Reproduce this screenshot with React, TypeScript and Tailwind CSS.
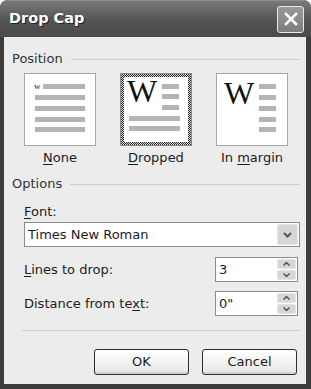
import React from "react";

function Bars({ rows }: { rows: [number, number, number][] }) {
  return (
    <>
      {rows.map(([x1, x2, y], i) => (
        <rect key={i} x={x1} y={y} width={x2 - x1} height={5} fill="#b4b4b4" />
      ))}
    </>
  );
}

function NoneIcon() {
  return (
    <svg width="70" height="71" viewBox="1 1 70 71" className="overflow-visible">
      <text x="10" y="16" fontSize="9" fontFamily="'Liberation Serif', serif" fill="#222">w</text>
      <Bars rows={[[19, 61, 11], [11, 61, 22], [11, 61, 33], [11, 61, 44], [11, 61, 54]]} />
    </svg>
  );
}

function DroppedIcon() {
  return (
    <svg width="64" height="65" viewBox="5 5 64 65" className="overflow-visible">
      <text x="8" y="30" fontSize="32" fontFamily="'Liberation Serif', serif" fill="#111">W</text>
      <Bars rows={[[43, 60, 12], [43, 60, 22], [43, 60, 33], [10, 61, 44], [10, 61, 54]]} />
    </svg>
  );
}

function MarginIcon() {
  return (
    <svg width="70" height="71" viewBox="1 1 70 71" className="overflow-visible">
      <text x="8" y="31" fontSize="32" fontFamily="'Liberation Serif', serif" fill="#111">W</text>
      <Bars rows={[[43, 60, 11], [43, 60, 22], [43, 60, 33], [43, 60, 44], [43, 60, 54]]} />
    </svg>
  );
}

function SpinButtons() {
  return (
    <div className="flex flex-col w-[19px] h-[21px] gap-[1px]">
      <div className="flex-1 rounded-[2px] bg-[#d6d6d6] border border-[#e4e4e4] flex items-center justify-center">
        <svg width="7" height="4" viewBox="0 0 7 4"><path d="M0.5 3.5 L3.5 0.5 L6.5 3.5" stroke="#555" strokeWidth="1.5" fill="none" /></svg>
      </div>
      <div className="flex-1 rounded-[2px] bg-[#d6d6d6] border border-[#e4e4e4] flex items-center justify-center">
        <svg width="7" height="4" viewBox="0 0 7 4"><path d="M0.5 0.5 L3.5 3.5 L6.5 0.5" stroke="#555" strokeWidth="1.5" fill="none" /></svg>
      </div>
    </div>
  );
}

function Spinner({ value }: { value: string }) {
  return (
    <div className="w-[83px] h-[25px] bg-white border border-[#8c8c8c] flex items-center justify-between pl-[3px] pr-[1px]">
      <span className="leading-none">{value}</span>
      <SpinButtons />
    </div>
  );
}

function XPButton({ children }: { children: React.ReactNode }) {
  return (
    <div className="w-[95px] h-[26px] rounded-[3px] border border-[#2e2e2e] bg-gradient-to-b from-[#ffffff] to-[#e6e6e6] flex items-center justify-center shadow-[inset_0_-2px_0_#d2d2d2]">
      {children}
    </div>
  );
}

export default function App() {
  return (
    <div className="w-[311px] h-[389px] bg-[#3d3d3d] flex flex-col rounded-t-[8px] overflow-hidden font-['DejaVu_Sans',sans-serif] text-[13px] text-[#1c1c1c]">
      {/* Title bar */}
      <div className="h-[37px] flex items-center justify-between pl-[9px] pr-[7px] bg-gradient-to-b from-[#7a7a7a] via-[#555555] to-[#4a4a4a] border-t border-[#8f8f8f]">
        <span className="text-white font-bold text-[14.5px] [text-shadow:1px_1px_0_#222]">Drop Cap</span>
        <div className="w-[27px] h-[27px] rounded-[3px] border border-[#e8e8e8] bg-gradient-to-b from-[#9a9a9a] to-[#7c7c7c] flex items-center justify-center">
          <svg width="14" height="14" viewBox="0 0 14 14">
            <path d="M2 2 L12 12 M12 2 L2 12" stroke="white" strokeWidth="2.6" strokeLinecap="square" />
          </svg>
        </div>
      </div>

      {/* Body */}
      <div className="flex-1 ml-[4px] mr-[5px] mb-[5px] bg-[#ececec] flex flex-col pt-[14px]">
        {/* Position */}
        <div className="h-[16px] flex items-center pl-[8px] pr-[6px]">
          <span className="leading-[16px] text-[#333]">Position</span>
          <div className="flex-1 ml-[8px] h-px bg-[#cdcdcd]" />
        </div>

        <div className="mt-[6px] flex gap-[24px] pl-[20px]">
          <div className="w-[72px] flex flex-col items-center">
            <div className="w-[72px] h-[73px] bg-white border border-[#a6a6a6] flex">
              <NoneIcon />
            </div>
            <div className="mt-[4px] h-[16px] leading-[16px]"><span className="underline underline-offset-2">N</span>one</div>
          </div>
          <div className="w-[72px] flex flex-col items-center">
            <div className="w-[72px] h-[73px] border border-[#8a8a8a] p-[3px] bg-[repeating-conic-gradient(#2a2a2a_0_25%,#d8d8d8_0_50%)] bg-[length:2px_2px]">
              <div className="w-full h-full bg-white flex">
                <DroppedIcon />
              </div>
            </div>
            <div className="mt-[4px] h-[16px] leading-[16px]"><span className="underline underline-offset-2">D</span>ropped</div>
          </div>
          <div className="w-[72px] flex flex-col items-center">
            <div className="w-[72px] h-[73px] bg-white border border-[#a6a6a6] flex">
              <MarginIcon />
            </div>
            <div className="mt-[4px] h-[16px] leading-[16px] whitespace-nowrap">In <span className="underline underline-offset-2">m</span>argin</div>
          </div>
        </div>

        {/* Options */}
        <div className="mt-[10px] h-[16px] flex items-center pl-[8px] pr-[6px]">
          <span className="leading-[16px] text-[#333]">Options</span>
          <div className="flex-1 ml-[8px] h-px bg-[#cdcdcd]" />
        </div>

        <div className="mt-[12px] h-[16px] leading-[16px] pl-[20px]">
          <span className="underline underline-offset-2">F</span>ont:
        </div>

        <div className="mt-[2px] ml-[20px] mr-[6px] h-[25px] bg-white border border-[#8c8c8c] flex items-center justify-between pl-[3px] pr-[1px]">
          <span className="leading-none">Times New Roman</span>
          <div className="w-[21px] h-[21px] rounded-[2px] bg-[#d6d6d6] border border-[#e6e6e6] flex items-center justify-center">
            <svg width="9" height="6" viewBox="0 0 9 6"><path d="M1 1 L4.5 4.5 L8 1" stroke="#555" strokeWidth="2" fill="none" /></svg>
          </div>
        </div>

        <div className="mt-[10px] h-[25px] flex items-center justify-between pl-[20px] pr-[8px]">
          <span><span className="underline underline-offset-2">L</span>ines to drop:</span>
          <Spinner value="3" />
        </div>

        <div className="mt-[9px] h-[25px] flex items-center justify-between pl-[20px] pr-[8px]">
          <span>Distance from te<span className="underline underline-offset-2">x</span>t:</span>
          <Spinner value={'0"'} />
        </div>

        <div className="mt-[14px] ml-[18px] mr-[6px] h-px bg-[#cdcdcd]" />

        <div className="mt-[18px] flex justify-end gap-[13px] pr-[9px]">
          <XPButton>OK</XPButton>
          <XPButton>Cancel</XPButton>
        </div>
      </div>
    </div>
  );
}
